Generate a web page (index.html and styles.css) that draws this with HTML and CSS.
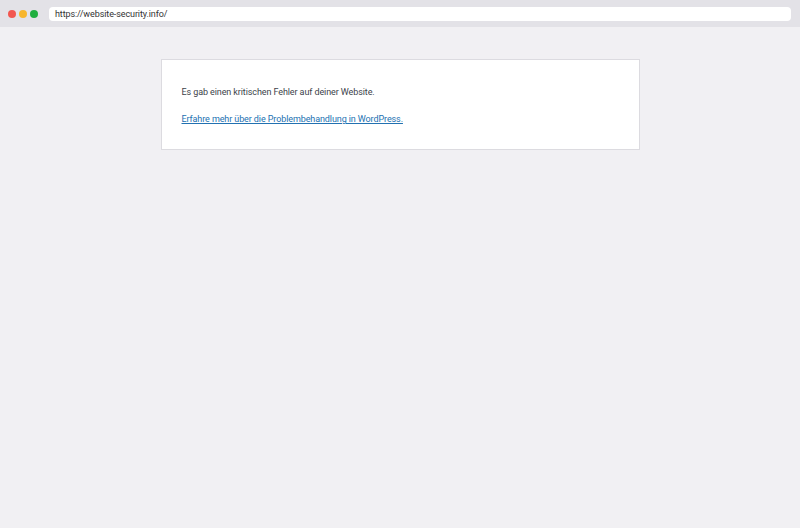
FILE: index.html
```html
<!DOCTYPE html>
<html lang="de">
<head>
<meta charset="utf-8">
<title>Fehler</title>
<link rel="stylesheet" href="styles.css">
</head>
<body>
<div class="chrome">
  <div class="dots">
    <span class="dot red"></span>
    <span class="dot yellow"></span>
    <span class="dot green"></span>
  </div>
  <div class="url">https://website-security.info/</div>
</div>
<main class="page">
  <div class="card">
    <p class="msg">Es gab einen kritischen Fehler auf deiner Website.</p>
    <p class="msg"><a href="#">Erfahre mehr über die Problembehandlung in WordPress.</a></p>
  </div>
</main>
</body>
</html>
```

FILE: styles.css
```css
html, body {
  margin: 0;
  padding: 0;
}
body {
  width: 800px;
  height: 528px;
  background: #f1f0f3;
  font-family: Roboto, "Liberation Sans", sans-serif;
  overflow: hidden;
}
.chrome {
  height: 27px;
  background: #e3e2e7;
  display: flex;
  align-items: center;
  box-sizing: border-box;
  padding: 0 9px 0 8px;
}
.dots {
  display: flex;
  gap: 3px;
  width: 41px;
}
.dot {
  width: 8px;
  height: 8px;
  border-radius: 50%;
}
.red { background: #f2564f; }
.yellow { background: #f8b62c; }
.green { background: #20ae3f; }
.url {
  flex: 1;
  height: 14px;
  background: #ffffff;
  border-radius: 4px;
  font-size: 9px;
  letter-spacing: -0.1px;
  line-height: 14px;
  color: #333;
  padding-left: 6px;
}
.page {
  padding-top: 32px;
  display: flex;
  justify-content: center;
}
.card {
  width: 479px;
  box-sizing: border-box;
  background: #fff;
  border: 1px solid #dcdbe0;
  padding: 25px 19px 22px 20px;
}
.msg {
  margin: 0;
  font-size: 9px;
  letter-spacing: -0.1px;
  line-height: 15px;
  color: #3c434a;
}
.msg + .msg {
  margin-top: 12px;
}
.msg a {
  color: #2271b1;
  text-decoration: underline;
}
```
